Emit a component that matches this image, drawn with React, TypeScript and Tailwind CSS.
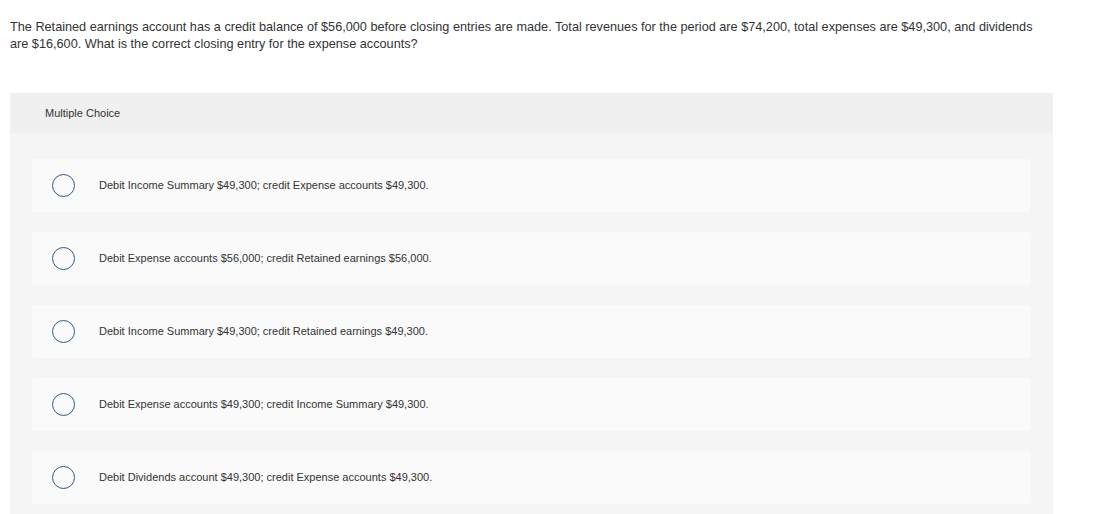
const options = [
  "Debit Income Summary $49,300; credit Expense accounts $49,300.",
  "Debit Expense accounts $56,000; credit Retained earnings $56,000.",
  "Debit Income Summary $49,300; credit Retained earnings $49,300.",
  "Debit Expense accounts $49,300; credit Income Summary $49,300.",
  "Debit Dividends account $49,300; credit Expense accounts $49,300.",
];

export default function App() {
  return (
    <div className="min-h-screen bg-white px-[10px] pt-[19px] text-[#333] font-['Liberation_Sans',Arial,sans-serif]">
      <p className="w-[1030px] text-[12.7px] leading-[17px]">
        The Retained earnings account has a credit balance of $56,000 before closing entries are made. Total revenues for the period are $74,200, total expenses are $49,300, and dividends are $16,600. What is the correct closing entry for the expense accounts?
      </p>

      <div className="mt-[40px] w-[1043px]">
        <div className="flex h-[40px] items-center bg-[#f0f0f0] pl-[35px] text-[11px] text-[#333]">
          Multiple Choice
        </div>
        <div className="flex flex-col gap-[20px] bg-[#f5f5f5] px-[22px] pt-[26px] pb-[20px]">
          {options.map((o) => (
            <div key={o} className="flex h-[53px] items-center rounded-sm bg-[#fafafa]">
              <span className="ml-[20px] h-[23px] w-[23px] rounded-full border-[1.5px] border-[#2f5c87]" />
              <span className="ml-[24px] text-[11px] text-[#333]">{o}</span>
            </div>
          ))}
        </div>
      </div>
    </div>
  );
}
